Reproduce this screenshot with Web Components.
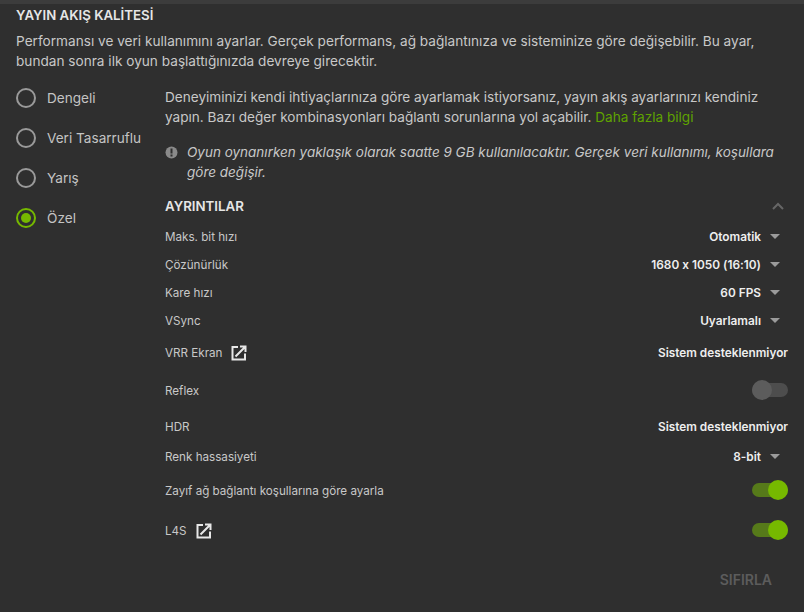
<!DOCTYPE html>
<html lang="tr"><head><meta charset="utf-8">
<style>
html,body{margin:0;padding:0;background:#2f2f2f}
body{width:804px;height:612px;overflow:hidden;font-family:Inter,"Liberation Sans",sans-serif;font-feature-settings:"calt" 0}
</style></head><body>
<stream-panel></stream-panel>
<script>
function def(name,css,html){customElements.define(name,class extends HTMLElement{connectedCallback(){if(this.shadowRoot)return;const r=this.attachShadow({mode:'open'});r.innerHTML='<style>'+css+'</style>'+html(this);}})}
const EXT='<svg width="16" height="16" viewBox="0 0 16 16" fill="none" stroke="#e8e8e8" stroke-width="2"><path d="M7 2H1.500v12.500H14V8.500"/><path d="M4.500 11.500 13.500 2.500M9 1.500h5.500V7" stroke-linejoin="miter"/></svg>';
def('radio-opt',`:host{display:flex;align-items:center;height:40px;gap:11px;font-size:13.6px;color:#c4c4c4}
.c{width:20px;height:20px;box-sizing:border-box;border:2px solid #9a9a9a;border-radius:50%;display:flex;align-items:center;justify-content:center}
:host([on]) .c{border-color:#76b900}:host([on]) .c::after{content:"";width:10px;height:10px;border-radius:50%;background:#76b900}`,
e=>`<span class="c"></span><slot></slot>`);
def('drop-down',`:host{display:inline-flex;align-items:center;gap:9px;font-size:11.85px;font-weight:600;color:#eee;padding-top:2px}
i{width:0;height:0;border:5px solid transparent;border-top:5px solid #9b9b9b;border-bottom:0;margin:-2px 8px 0 0}`,
()=>`<slot></slot><i></i>`);
def('tog-gle',`:host{display:block;position:relative;width:36px;height:14px;border-radius:7px;background:#4d4d4d}
:host::after{content:"";position:absolute;left:0;top:-3px;width:20px;height:20px;border-radius:50%;background:#5c5c5c}
:host([on]){background:#567a1a}:host([on])::after{left:16px;background:#76b900}`,()=>``);
def('set-row',`:host{display:flex;align-items:center;justify-content:space-between;height:var(--h,28px);font-size:11.65px;color:#c8c8c8}
.l{display:flex;align-items:center;gap:9px;padding-top:2px}svg{display:block}`,
e=>`<span class="l"><span>${e.getAttribute('label')}</span>${e.hasAttribute('ext')?EXT:''}</span><slot></slot>`);
def('stream-panel',`:host{display:block;width:804px;height:612px;box-sizing:border-box;border-top:4px solid #3c3c3c;background:#2f2f2f;color:#c8c8c8;font-size:13.6px;line-height:20px}
h2{margin:0;padding:1px 16px 0;height:22px;font-size:13.25px;line-height:20px;font-weight:600;color:#e6e6e6}
.intro{margin:4px 16px 0;width:760px;font-size:13.64px}
.main{display:flex;margin-top:7px}
.left{width:165px;padding-left:16px;box-sizing:border-box;flex:none}
.right{width:623px;flex:none}
.right p{margin:0}.p1{padding-top:9px}
a{color:#5fa300;text-decoration:none}
.note{display:flex;gap:9px;margin-top:15px;font-style:italic;font-size:13.5px}
.note svg{flex:none;margin-top:4px}
.head{display:flex;justify-content:space-between;align-items:center;margin-top:11px;height:26px;font-size:13.3px;font-weight:600;color:#e6e6e6}
.head svg{margin-right:4px}
.rows{margin-top:3px}
.sys{font-size:11.8px;font-weight:600;color:#eee;padding-top:2px}
.foot{display:flex;justify-content:flex-end;padding:20px 16px 0 0;font-size:14px;font-weight:600;color:#5c5c5c}
`,()=>`<h2>YAYIN AKIŞ KALİTESİ</h2>
<div class="intro">Performansı ve veri kullanımını ayarlar. Gerçek performans, ağ bağlantınıza ve sisteminize göre değişebilir. Bu ayar, bundan sonra ilk oyun başlattığınızda devreye girecektir.</div>
<div class="main"><div class="left">
<radio-opt>Dengeli</radio-opt><radio-opt>Veri Tasarruflu</radio-opt><radio-opt>Yarış</radio-opt><radio-opt on>Özel</radio-opt>
</div><div class="right">
<p class="p1">Deneyiminizi kendi ihtiyaçlarınıza göre ayarlamak istiyorsanız, yayın akış ayarlarınızı kendiniz yapın. Bazı değer kombinasyonları bağlantı sorunlarına yol açabilir. <a>Daha fazla bilgi</a></p>
<div class="note"><svg width="13" height="13" viewBox="0 0 13 13"><circle cx="6.500" cy="6.500" r="6" fill="#8a8a8a"/><rect x="5.500" y="2.500" width="2" height="5" fill="#2f2f2f"/><rect x="5.500" y="8.500" width="2" height="2" fill="#2f2f2f"/></svg><span>Oyun oynanırken yaklaşık olarak saatte 9 GB kullanılacaktır. Gerçek veri kullanımı, koşullara göre değişir.</span></div>
<div class="head"><span>AYRINTILAR</span><svg width="12" height="8" viewBox="0 0 12 8" fill="none" stroke="#666" stroke-width="2"><path d="M1 7l5-5 5 5"/></svg></div>
<div class="rows">
<set-row label="Maks. bit hızı"><drop-down>Otomatik</drop-down></set-row>
<set-row label="Çözünürlük"><drop-down>1680 x 1050 (16:10)</drop-down></set-row>
<set-row label="Kare hızı"><drop-down>60 FPS</drop-down></set-row>
<set-row label="VSync"><drop-down>Uyarlamalı</drop-down></set-row>
<set-row label="VRR Ekran" ext style="--h:36px"><span class="sys">Sistem desteklenmiyor</span></set-row>
<set-row label="Reflex" style="--h:40px"><tog-gle></tog-gle></set-row>
<set-row label="HDR" style="--h:32px"><span class="sys">Sistem desteklenmiyor</span></set-row>
<set-row label="Renk hassasiyeti"><drop-down>8-bit</drop-down></set-row>
<set-row label="Zayıf ağ bağlantı koşullarına göre ayarla" style="--h:40px"><tog-gle on></tog-gle></set-row>
<set-row label="L4S" ext style="--h:40px"><tog-gle on></tog-gle></set-row>
</div>
<div class="foot">SIFIRLA</div>
</div></div>`);
</script>
</body></html>
